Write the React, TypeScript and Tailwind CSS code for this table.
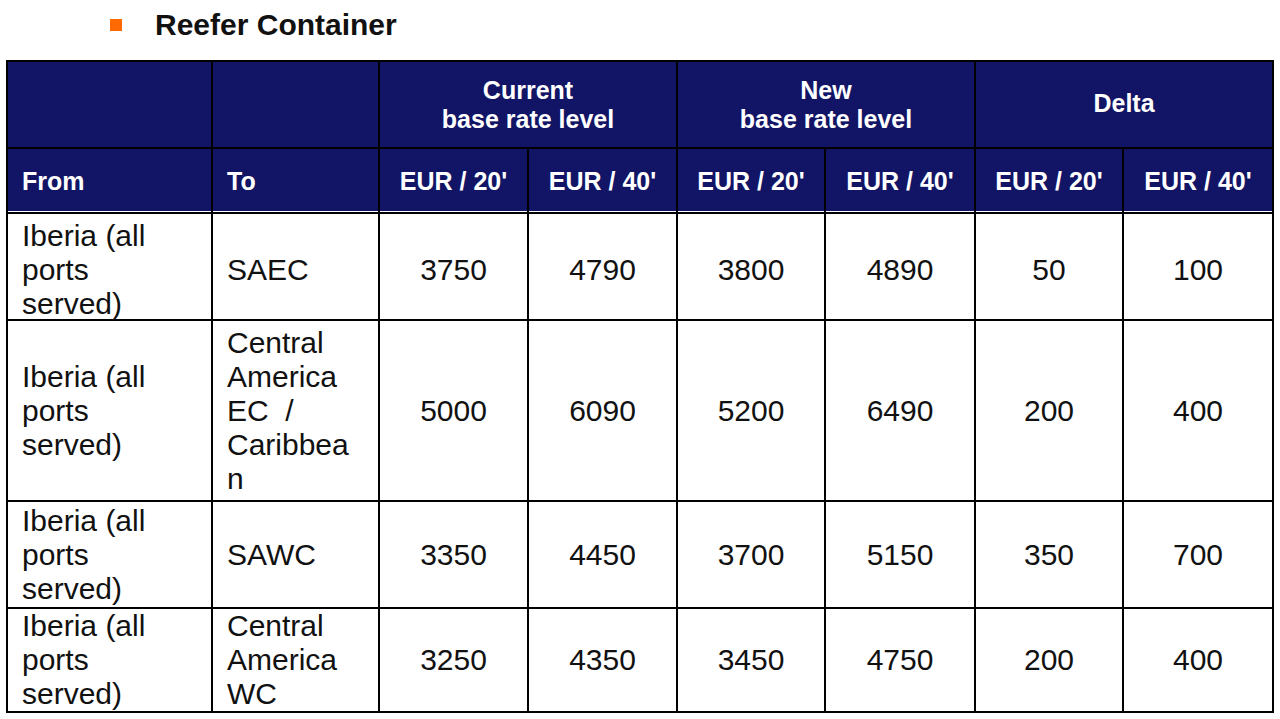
const font = { fontFamily: '"Liberation Sans", Arial, sans-serif' }

type Row = { from: string[]; to: string[]; vals: string[] }

const rows: Row[] = [
  { from: ["Iberia (all", "ports", "served)"], to: ["SAEC"], vals: ["3750", "4790", "3800", "4890", "50", "100"] },
  {
    from: ["Iberia (all", "ports", "served)"],
    to: ["Central", "America", "EC\u00a0 /", "Caribbea", "n"],
    vals: ["5000", "6090", "5200", "6490", "200", "400"],
  },
  { from: ["Iberia (all", "ports", "served)"], to: ["SAWC"], vals: ["3350", "4450", "3700", "5150", "350", "700"] },
  {
    from: ["Iberia (all", "ports", "served)"],
    to: ["Central", "America", "WC"],
    vals: ["3250", "4350", "3450", "4750", "200", "400"],
  },
]

const Lines = ({ lines }: { lines: string[] }) => (
  <div>
    {lines.map((l, i) => (
      <div key={i} className="whitespace-pre">{l}</div>
    ))}
  </div>
)

export default function App() {
  const head = "bg-[#121565] text-white font-bold text-[25px] leading-[29px]"
  const sub = "bg-[#121565] text-white font-bold text-[25px] leading-[29px] flex items-center border-b border-white pt-[2px]"
  const body = "bg-white text-[#111] text-[30px] leading-[34px] flex items-center"
  return (
    <div className="w-[1280px] h-[719px] bg-white overflow-hidden" style={font}>
      <div className="flex items-center pt-[8px] pl-[110px]">
        <div className="w-[12px] h-[12px] bg-[#ff6a00]" />
        <div className="ml-[33px] text-[30px] leading-[34px] font-bold text-[#111]">Reefer Container</div>
      </div>
      <div className="mt-[18px] ml-[6px] w-[1268px] grid bg-black p-[2px] gap-[2px] grid-cols-[203px_165px_147px_147px_146px_148px_146px_148px] grid-rows-[85px_63px_105px_179px_105px_102px]">
        <div className={head} />
        <div className={head} />
        <div className={`${head} col-span-2 flex items-center justify-center text-center`}>
          <div>Current<br />base rate level</div>
        </div>
        <div className={`${head} col-span-2 flex items-center justify-center text-center`}>
          <div>New<br />base rate level</div>
        </div>
        <div className={`${head} col-span-2 flex items-center justify-center text-center pb-[3px]`}>
          <div>Delta</div>
        </div>

        <div className={`${sub} pl-[14px]`}>From</div>
        <div className={`${sub} pl-[14px]`}>To</div>
        {["EUR / 20'", "EUR / 40'", "EUR / 20'", "EUR / 40'", "EUR / 20'", "EUR / 40'"].map((t, i) => (
          <div key={i} className={`${sub} justify-center`}>{t}</div>
        ))}

        {rows.map((r, i) => {
          const pad = i === 0 ? "pt-[6px]" : ""
          return (
            <div key={i} className="contents">
              <div className={`${body} ${pad} pl-[14px]`}><Lines lines={r.from} /></div>
              <div className={`${body} ${pad} pl-[14px]`}><Lines lines={r.to} /></div>
              {r.vals.map((v, j) => (
                <div key={j} className={`${body} ${pad} justify-center`}>{v}</div>
              ))}
            </div>
          )
        })}
      </div>
    </div>
  )
}
